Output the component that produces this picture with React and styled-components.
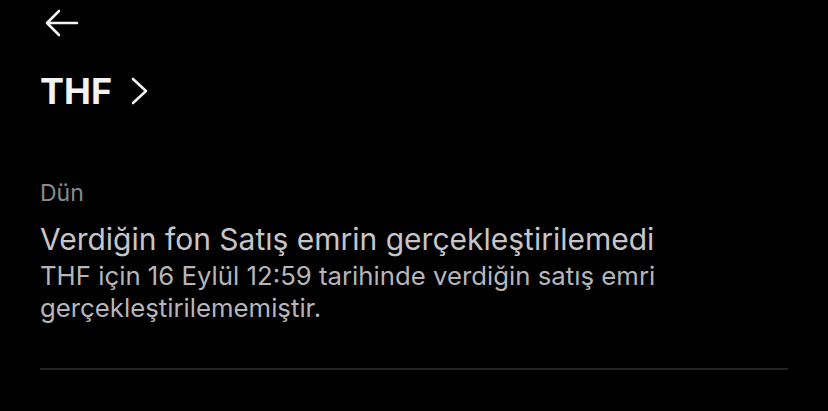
import React from "react";
import styled, { createGlobalStyle } from "styled-components";

const GlobalStyle = createGlobalStyle`
  html, body {
    margin: 0;
    padding: 0;
    background: #000;
  }
  body {
    font-family: Inter, "Noto Sans", sans-serif;
    -webkit-font-smoothing: antialiased;
  }
`;

const Page = styled.div`
  width: 828px;
  height: 411px;
  background: #000;
  box-sizing: border-box;
  padding: 6px 40px 0 40px;
  display: flex;
  flex-direction: column;
  overflow: hidden;
`;

const BackButton = styled.button`
  width: 44px;
  height: 34px;
  padding: 0;
  margin-left: 3px;
  border: none;
  background: transparent;
  display: flex;
  align-items: center;
  cursor: pointer;
`;

const FundLink = styled.div`
  margin-top: 29px;
  display: flex;
  align-items: center;
  gap: 18px;
  color: #f2f2f2;
  font-size: 36px;
  font-weight: 700;
  line-height: 44px;
`;

const Notification = styled.div`
  margin-top: 66px;
  display: flex;
  flex-direction: column;
  padding-bottom: 44px;
  border-bottom: 2px solid #232327;
`;

const DateLabel = styled.div`
  color: #8a8a8f;
  font-size: 23px;
  line-height: 28px;
`;

const Title = styled.div`
  margin-top: 14px;
  color: #c6c6ca;
  font-size: 30px;
  line-height: 36px;
`;

const Body = styled.div`
  margin-top: 3px;
  color: #b6b6ba;
  font-size: 25.75px;
  line-height: 32px;
  width: 700px;
`;

const ArrowLeft = () => (
  <svg width="36" height="30" viewBox="0 0 36 30" fill="none">
    <path
      d="M34 15H4M16 3L4 15l12 12"
      stroke="#f2f2f2"
      strokeWidth="2.6"
      strokeLinecap="round"
      strokeLinejoin="round"
    />
  </svg>
);

const ChevronRight = () => (
  <svg width="20" height="30" viewBox="0 0 20 30" fill="none">
    <path
      d="M3 3l13 12L3 27"
      stroke="#f2f2f2"
      strokeWidth="2.6"
      strokeLinecap="round"
      strokeLinejoin="round"
    />
  </svg>
);

export default function App() {
  return (
    <>
      <GlobalStyle />
      <Page>
        <BackButton aria-label="Geri">
          <ArrowLeft />
        </BackButton>
        <FundLink>
          THF
          <ChevronRight />
        </FundLink>
        <Notification>
          <DateLabel>Dün</DateLabel>
          <Title>Verdiğin fon Satış emrin gerçekleştirilemedi</Title>
          <Body>
            THF için 16 Eylül 12:59 tarihinde verdiğin satış emri
            gerçekleştirilememiştir.
          </Body>
        </Notification>
      </Page>
    </>
  );
}
